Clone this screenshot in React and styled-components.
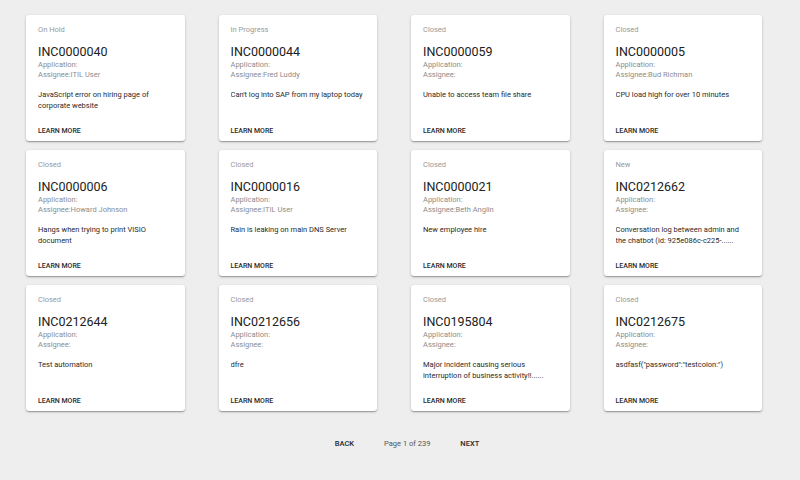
import React from "react";
import styled, { createGlobalStyle } from "styled-components";

const GlobalStyle = createGlobalStyle`
  body {
    margin: 0;
    background: #eeeeee;
    font-family: Roboto, "Liberation Sans", Arial, sans-serif;
  }
`;

const Page = styled.div`
  width: 800px;
  height: 480px;
  box-sizing: border-box;
  padding: 15px 38px 0 26px;
`;

const Grid = styled.div`
  display: grid;
  grid-template-columns: repeat(4, 1fr);
  column-gap: 34px;
  row-gap: 9px;
`;

const Card = styled.div`
  height: 126px;
  box-sizing: border-box;
  display: flex;
  flex-direction: column;
  padding: 9px 12px 0 12px;
  background: #fff;
  border-radius: 3px;
  box-shadow: 0 1px 3px rgba(0, 0, 0, 0.2), 0 1px 1px rgba(0, 0, 0, 0.14),
    0 2px 1px -1px rgba(0, 0, 0, 0.12);
`;

const Status = styled.div`
  font-size: 7.5px;
  line-height: 12px;
  color: #999;
`;

const Number = styled.div`
  margin-top: 7px;
  font-size: 12.5px;
  line-height: 17px;
  color: #212121;
`;

const Meta = styled.div`
  font-size: 7.5px;
  line-height: 10px;
  color: #8c8c8c;
`;

const Description = styled.div`
  margin-top: 9px;
  font-size: 7.5px;
  line-height: 11px;
  color: #2a2a2a;
  height: 22px;
  overflow: hidden;
`;

const Actions = styled.div`
  margin-top: auto;
  height: 21px;
  display: flex;
  align-items: center;
`;

const TextButton = styled.button`
  border: none;
  background: none;
  padding: 0;
  font-family: inherit;
  font-size: 7px;
  font-weight: 500;
  color: #2a2a2a;
  text-transform: uppercase;
  cursor: pointer;
`;

const Pager = styled.div`
  display: flex;
  justify-content: center;
  align-items: center;
  gap: 30px;
  margin-top: 28px;
  padding-left: 26px;

  ${TextButton} {
    font-size: 7.5px;
  }
`;

const PageLabel = styled.span`
  font-size: 7.5px;
  color: #555;
`;

const incidents = [
  { status: "On Hold", number: "INC0000040", assignee: "ITIL User", text: "JavaScript error on hiring page of corporate website" },
  { status: "In Progress", number: "INC0000044", assignee: "Fred Luddy", text: "Can't log into SAP from my laptop today" },
  { status: "Closed", number: "INC0000059", assignee: "", text: "Unable to access team file share" },
  { status: "Closed", number: "INC0000005", assignee: "Bud Richman", text: "CPU load high for over 10 minutes" },
  { status: "Closed", number: "INC0000006", assignee: "Howard Johnson", text: "Hangs when trying to print VISIO document" },
  { status: "Closed", number: "INC0000016", assignee: "ITIL User", text: "Rain is leaking on main DNS Server" },
  { status: "Closed", number: "INC0000021", assignee: "Beth Anglin", text: "New employee hire" },
  { status: "New", number: "INC0212662", assignee: "", text: "Conversation log between admin and the chatbot (id: 925e086c-c225-......" },
  { status: "Closed", number: "INC0212644", assignee: "", text: "Test automation" },
  { status: "Closed", number: "INC0212656", assignee: "", text: "dfre" },
  { status: "Closed", number: "INC0195804", assignee: "", text: "Major incident causing serious interruption of business activity!!......" },
  { status: "Closed", number: "INC0212675", assignee: "", text: "asdfasf(\"password\":\"testcolon:\")" },
];

const IncidentCard = ({ item }) => (
  <Card>
    <Status>{item.status}</Status>
    <Number>{item.number}</Number>
    <Meta>Application:</Meta>
    <Meta>Assignee:{item.assignee}</Meta>
    <Description>{item.text}</Description>
    <Actions>
      <TextButton>Learn More</TextButton>
    </Actions>
  </Card>
);

const App = () => {
  return (
    <>
      <GlobalStyle />
      <Page>
        <Grid>
          {incidents.map((item) => (
            <IncidentCard key={item.number} item={item} />
          ))}
        </Grid>
        <Pager>
          <TextButton>Back</TextButton>
          <PageLabel>Page 1 of 239</PageLabel>
          <TextButton>Next</TextButton>
        </Pager>
      </Page>
    </>
  );
};

export default App;
